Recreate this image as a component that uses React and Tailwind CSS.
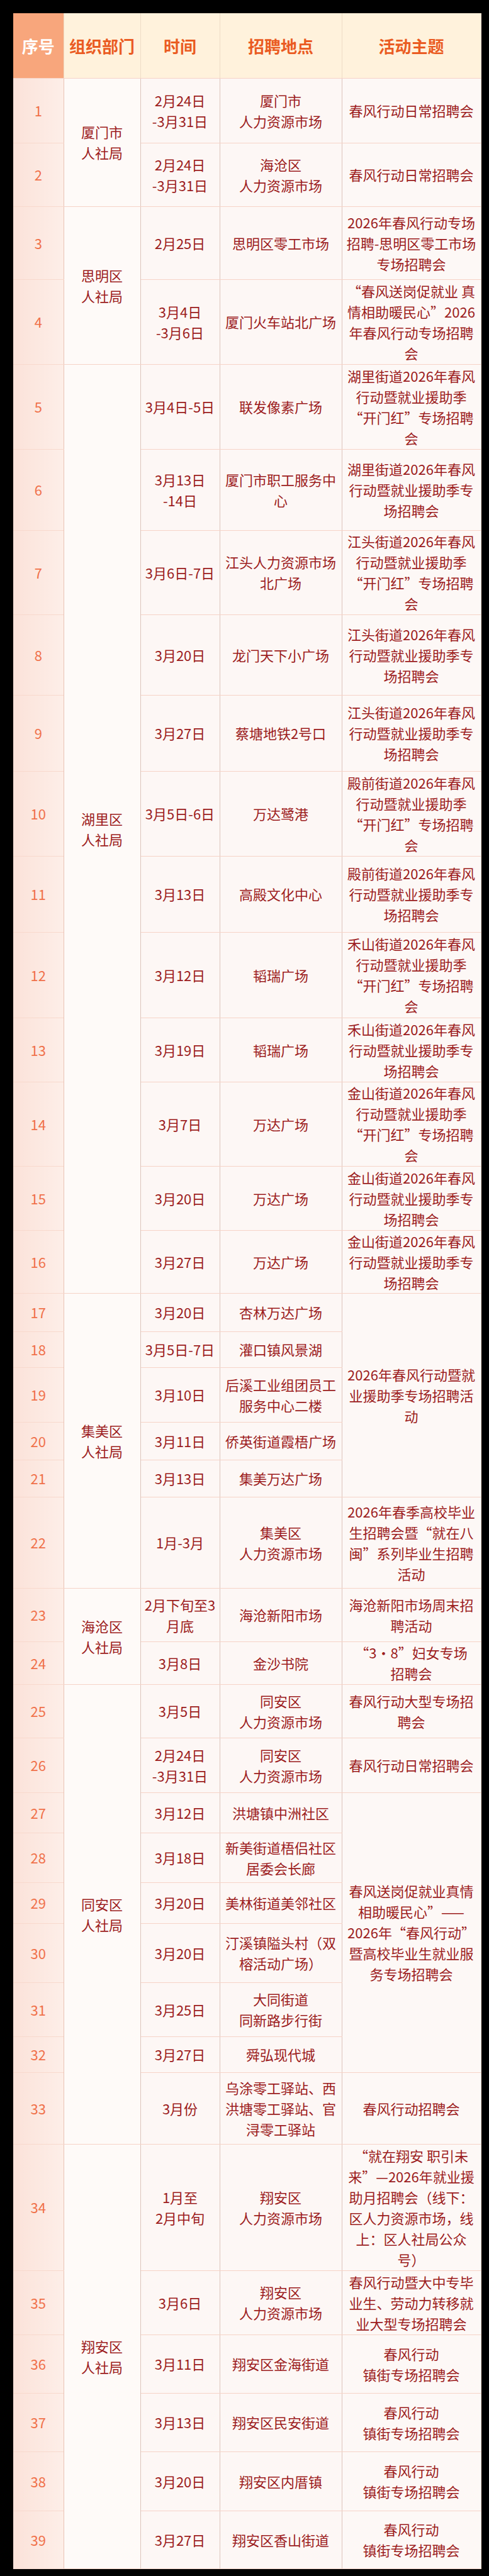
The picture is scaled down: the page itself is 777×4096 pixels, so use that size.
import React from 'react';

// 红色的“专场招聘会”三行 / “开门红”四行，两种主题反复出现
const zhuan = (s) => [`${s}2026年春风`, '行动暨就业援助季专', '场招聘会'];
const kmh = (s) => [`${s}2026年春风`, '行动暨就业援助季', '“开门红”专场招聘', '会'];
const richang = ['春风行动日常招聘会'];
const zhenjie = ['春风行动', '镇街专场招聘会'];

const depts = {
  1: { span: 2, lines: ['厦门市', '人社局'] },
  3: { span: 2, lines: ['思明区', '人社局'] },
  5: { span: 12, lines: ['湖里区', '人社局'] },
  17: { span: 6, lines: ['集美区', '人社局'] },
  23: { span: 2, lines: ['海沧区', '人社局'] },
  25: { span: 9, lines: ['同安区', '人社局'] },
  34: { span: 6, lines: ['翔安区', '人社局'] },
};

// [height, time, place, activity, activity rowSpan]; activity null = covered by the cell above
const rows = [
  ['h-[103px]', ['2月24日', '-3月31日'], ['厦门市', '人力资源市场'], richang],
  ['h-[101px]', ['2月24日', '-3月31日'], ['海沧区', '人力资源市场'], richang],
  ['h-[116px]', ['2月25日'], ['思明区零工市场'], ['2026年春风行动专场', '招聘-思明区零工市场', '专场招聘会']],
  ['h-[135px]', ['3月4日', '-3月6日'], ['厦门火车站北广场'], ['“春风送岗促就业 真', '情相助暖民心”2026', '年春风行动专场招聘', '会']],
  ['h-[135px]', ['3月4日-5日'], ['联发像素广场'], kmh('湖里街道')],
  ['h-[129px]', ['3月13日', '-14日'], ['厦门市职工服务中', '心'], zhuan('湖里街道')],
  ['h-[134px]', ['3月6日-7日'], ['江头人力资源市场', '北广场'], kmh('江头街道')],
  ['h-[128px]', ['3月20日'], ['龙门天下小广场'], zhuan('江头街道')],
  ['h-[121px]', ['3月27日'], ['蔡塘地铁2号口'], zhuan('江头街道')],
  ['h-[135px]', ['3月5日-6日'], ['万达鹭港'], kmh('殿前街道')],
  ['h-[121px]', ['3月13日'], ['高殿文化中心'], zhuan('殿前街道')],
  ['h-[136px]', ['3月12日'], ['韬瑞广场'], kmh('禾山街道')],
  ['h-[102px]', ['3月19日'], ['韬瑞广场'], zhuan('禾山街道')],
  ['h-[134px]', ['3月7日'], ['万达广场'], kmh('金山街道')],
  ['h-[102px]', ['3月20日'], ['万达广场'], zhuan('金山街道')],
  ['h-[100px]', ['3月27日'], ['万达广场'], zhuan('金山街道')],
  ['h-[61px]', ['3月20日'], ['杏林万达广场'], ['2026年春风行动暨就', '业援助季专场招聘活', '动'], 5],
  ['h-[57px]', ['3月5日-7日'], ['灌口镇风景湖'], null],
  ['h-[87px]', ['3月10日'], ['后溪工业组团员工', '服务中心二楼'], null],
  ['h-[60px]', ['3月11日'], ['侨英街道霞梧广场'], null],
  ['h-[59px]', ['3月13日'], ['集美万达广场'], null],
  ['h-[145px]', ['1月-3月'], ['集美区', '人力资源市场'], ['2026年春季高校毕业', '生招聘会暨“就在八', '闽”系列毕业生招聘', '活动']],
  ['h-[85px]', ['2月下旬至3', '月底'], ['海沧新阳市场'], ['海沧新阳市场周末招', '聘活动']],
  ['h-[68px]', ['3月8日'], ['金沙书院'], ['“3·8”妇女专场', '招聘会']],
  ['h-[85px]', ['3月5日'], ['同安区', '人力资源市场'], ['春风行动大型专场招', '聘会']],
  ['h-[87px]', ['2月24日', '-3月31日'], ['同安区', '人力资源市场'], richang],
  ['h-[64px]', ['3月12日'], ['洪塘镇中洲社区'], ['春风送岗促就业真情', '相助暖民心”——', '2026年“春风行动”', '暨高校毕业生就业服', '务专场招聘会'], 6],
  ['h-[79px]', ['3月18日'], ['新美街道梧侣社区', '居委会长廊'], null],
  ['h-[65px]', ['3月20日'], ['美林街道美邻社区'], null],
  ['h-[94px]', ['3月20日'], ['汀溪镇隘头村（双', '榕活动广场）'], null],
  ['h-[86px]', ['3月25日'], ['大同街道', '同新路步行街'], null],
  ['h-[57px]', ['3月27日'], ['舜弘现代城'], null],
  ['h-[114px]', ['3月份'], ['乌涂零工驿站、西', '洪塘零工驿站、官', '浔零工驿站'], ['春风行动招聘会']],
  ['h-[201px]', ['1月至', '2月中旬'], ['翔安区', '人力资源市场'], ['“就在翔安 职引未', '来”—2026年就业援', '助月招聘会（线下：', '区人力资源市场，线', '上：区人社局公众', '号）']],
  ['h-[102px]', ['3月6日'], ['翔安区', '人力资源市场'], ['春风行动暨大中专毕', '业生、劳动力转移就', '业大型专场招聘会']],
  ['h-[93px]', ['3月11日'], ['翔安区金海街道'], zhenjie],
  ['h-[93px]', ['3月13日'], ['翔安区民安街道'], zhenjie],
  ['h-[94px]', ['3月20日'], ['翔安区内厝镇'], zhenjie],
  ['h-[92px]', ['3月27日'], ['翔安区香山街道'], zhenjie],
];

const cell =
  'p-0 align-middle text-center border-b border-r border-b-[#f6d3c7] border-r-[#dcc4bb]';

function Lines({ lines }) {
  return lines.map((l, i) => (
    <div key={i} className="whitespace-nowrap">
      {l}
    </div>
  ));
}

export default function App() {
  return (
    <div className="min-h-screen bg-black pt-[21px] pl-[21px] pb-[12px]">
      <table className="table-fixed border-collapse w-[743px] font-['Noto_Sans_CJK_SC',sans-serif]">
        <colgroup>
          <col className="w-[80px]" />
          <col className="w-[122px]" />
          <col className="w-[126px]" />
          <col className="w-[194px]" />
          <col className="w-[221px]" />
        </colgroup>
        <thead>
          <tr className="h-[103px] text-[26px] font-bold">
            <th className="p-0 bg-[#f8a67c] text-white border-b border-b-[#f6d3c7]">序号</th>
            <th className="p-0 bg-[#fff2dc] text-[#ea5b22] border-x border-x-[#eedcc6] border-b border-b-[#f6d3c7]">组织部门</th>
            <th className="p-0 bg-[#fff2dc] text-[#ea5b22] border-r border-r-[#eedcc6] border-b border-b-[#f6d3c7]">时间</th>
            <th className="p-0 bg-[#fff2dc] text-[#ea5b22] border-r border-r-[#eedcc6] border-b border-b-[#f6d3c7]">招聘地点</th>
            <th className="p-0 bg-[#fff2dc] text-[#ea5b22] border-r border-r-[#f4dccf] border-b border-b-[#f6d3c7]">活动主题</th>
          </tr>
        </thead>
        <tbody className="text-[22px] leading-[33px] text-[#9c1c20]">
          {rows.map(([h, time, place, act, span], i) => {
            const n = i + 1;
            const dept = depts[n];
            return (
              <tr key={n} className={h}>
                <td className="p-0 align-middle text-center bg-gradient-to-r from-[#fbe2d9] to-[#fdeee8] text-[#f0714a] border-b border-b-[#f8d9cd]">
                  {n}
                </td>
                {dept && (
                  <td rowSpan={dept.span} className={`${cell} border-l border-l-[#e9c3b5] bg-[#fefaf8]`}>
                    <Lines lines={dept.lines} />
                  </td>
                )}
                <td className={`${cell} bg-[#fdf7f5]`}>
                  <Lines lines={time} />
                </td>
                <td className={`${cell} bg-[#fdf7f5]`}>
                  <Lines lines={place} />
                </td>
                {act && (
                  <td rowSpan={span || 1} className={`${cell} border-r-[#f4dccf] bg-[#fdf8f6]`}>
                    <Lines lines={act} />
                  </td>
                )}
              </tr>
            );
          })}
        </tbody>
      </table>
    </div>
  );
}
